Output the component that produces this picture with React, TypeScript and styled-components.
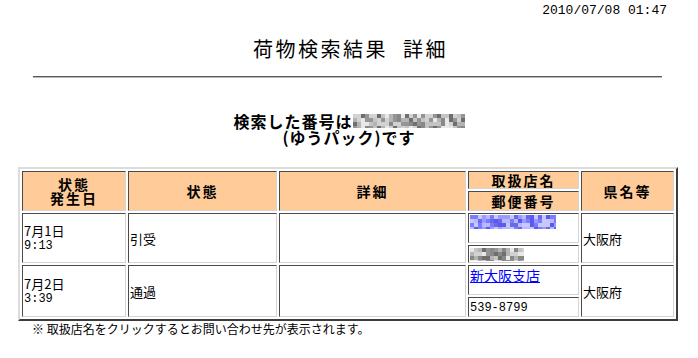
import React from "react";
import styled, { createGlobalStyle } from "styled-components";

const Global = createGlobalStyle`
  html, body { margin: 0; padding: 0; background: #fff; }
  body { font-family: "Noto Sans CJK JP", sans-serif; color: #000; }
`;

const Page = styled.div`
  width: 698px;
  display: flex;
  flex-direction: column;
`;

const Stamp = styled.div`
  margin-top: 3px;
  padding-right: 31px;
  text-align: right;
  font-family: "Liberation Mono", monospace;
  font-size: 13px;
  line-height: 16px;
`;

const Title = styled.h1`
  margin: 18px 0 0;
  text-align: center;
  font-size: 20px;
  line-height: 24px;
  font-weight: normal;
  letter-spacing: 2.5px;
  word-spacing: 8px;
  padding-left: 3px;
`;

const Rule = styled.div`
  margin: 15px 0 0 33px;
  width: 629px;
  height: 0;
  border-top: 1px solid #5a5a5a;
  border-bottom: 1px solid #b8b8b8;
`;

const Lead = styled.div`
  margin-top: 35px;
  text-align: center;
  font-size: 16px;
  line-height: 16px;
  font-weight: bold;
  letter-spacing: 1px;
`;

const Line = styled.div`
  display: flex;
  justify-content: center;
  align-items: center;
`;

const Table = styled.table`
  margin: 22px 0 0 18px;
  border-collapse: separate;
  border-spacing: 2px;
  border-style: solid;
  border-width: 2px;
  border-color: #dcdcdc #3c3c3c #3c3c3c #dcdcdc;
  table-layout: fixed;
  width: 660px;
`;

const Col = styled.col<{ $w: number }>`
  width: ${(p) => p.$w}px;
`;

const Cell = styled.td<{ $top?: boolean; $h?: number }>`
  box-sizing: border-box;
  border-style: solid;
  border-width: 1px;
  border-color: #4a4a4a #d4d4d4 #d4d4d4 #4a4a4a;
  padding: 1px;
  font-size: 13px;
  line-height: 13px;
  vertical-align: ${(p) => (p.$top ? "top" : "middle")};
  height: ${(p) => (p.$h ? `${p.$h}px` : "auto")};
`;

const HeadCell = styled.th<{ $h?: number }>`
  box-sizing: border-box;
  border-style: solid;
  border-width: 1px;
  border-color: #4a4a4a #d4d4d4 #d4d4d4 #4a4a4a;
  background: #ffcc99;
  padding: 0;
  font-size: 14px;
  line-height: 14px;
  font-weight: bold;
  letter-spacing: 2px;
  text-align: center;
  vertical-align: middle;
  height: ${(p) => (p.$h ? `${p.$h}px` : "auto")};
`;

const Mono = styled.span`
  font-family: "Liberation Mono", monospace;
  font-size: 12px;
`;

const ShopLink = styled.a`
  color: #0000ff;
  text-decoration: underline;
  font-size: 14px;
  line-height: 16px;
`;

const Note = styled.div`
  margin: 1px 0 0 32px;
  font-size: 12px;
  line-height: 14px;
`;

type MosaicProps = { w: number; h: number; cell: number; palette: string[]; seed: number };

function Mosaic({ w, h, cell, palette, seed }: MosaicProps) {
  const rects: React.ReactElement[] = [];
  let s = seed;
  const rnd = () => {
    s = (s * 9301 + 49297) % 233280;
    return s / 233280;
  };
  for (let y = 0; y < h; y += cell) {
    for (let x = 0; x < w; x += cell) {
      const c = palette[Math.floor(rnd() * palette.length)];
      rects.push(<rect key={`${x}-${y}`} x={x} y={y} width={cell} height={cell} fill={c} />);
    }
  }
  return (
    <svg width={w} height={h} viewBox={`0 0 ${w} ${h}`} style={{ display: "block" }}>
      {rects}
    </svg>
  );
}

const MosaicWrap = styled.span`
  display: inline-block;
  vertical-align: middle;
`;

const grays = ["#6e6e6e", "#959595", "#b4b4b4", "#d2d2d2", "#e8e8e8", "#888888", "#c4c4c4"];
const blues = ["#5a5af0", "#7b7bff", "#9a9aff", "#b8b8ff", "#6a6ae8", "#c8c8ff"];

export default function App() {
  return (
    <Page>
      <Global />
      <Stamp>2010/07/08 01:47</Stamp>
      <Title>荷物検索結果 詳細</Title>
      <Rule />
      <Lead>
        <Line>
          検索した番号は
          <MosaicWrap>
            <Mosaic w={112} h={14} cell={4} palette={grays} seed={7} />
          </MosaicWrap>
        </Line>
        <Line>(ゆうパック)です</Line>
      </Lead>
      <Table>
        <colgroup>
          <Col $w={104} />
          <Col $w={149} />
          <Col $w={187} />
          <Col $w={111} />
          <Col $w={93} />
        </colgroup>
        <thead>
          <tr>
            <HeadCell rowSpan={2}>
              状態
              <br />
              発生日
            </HeadCell>
            <HeadCell rowSpan={2}>状態</HeadCell>
            <HeadCell rowSpan={2}>詳細</HeadCell>
            <HeadCell $h={18}>取扱店名</HeadCell>
            <HeadCell rowSpan={2}>県名等</HeadCell>
          </tr>
          <tr>
            <HeadCell $h={20}>郵便番号</HeadCell>
          </tr>
        </thead>
        <tbody>
          <tr>
            <Cell rowSpan={2}>
              7月1日
              <br />
              <Mono>9:13</Mono>
            </Cell>
            <Cell rowSpan={2}>引受</Cell>
            <Cell rowSpan={2}></Cell>
            <Cell $top $h={30}>
              <Mosaic w={86} h={14} cell={4} palette={blues} seed={3} />
            </Cell>
            <Cell rowSpan={2}>大阪府</Cell>
          </tr>
          <tr>
            <Cell $h={18}>
              <Mosaic w={54} h={13} cell={4} palette={grays} seed={11} />
            </Cell>
          </tr>
          <tr>
            <Cell rowSpan={2}>
              7月2日
              <br />
              <Mono>3:39</Mono>
            </Cell>
            <Cell rowSpan={2}>通過</Cell>
            <Cell rowSpan={2}></Cell>
            <Cell $top $h={30}>
              <ShopLink href="#">新大阪支店</ShopLink>
            </Cell>
            <Cell rowSpan={2}>大阪府</Cell>
          </tr>
          <tr>
            <Cell $h={18}>
              <Mono>539-8799</Mono>
            </Cell>
          </tr>
        </tbody>
      </Table>
      <Note>※ 取扱店名をクリックするとお問い合わせ先が表示されます。</Note>
    </Page>
  );
}
